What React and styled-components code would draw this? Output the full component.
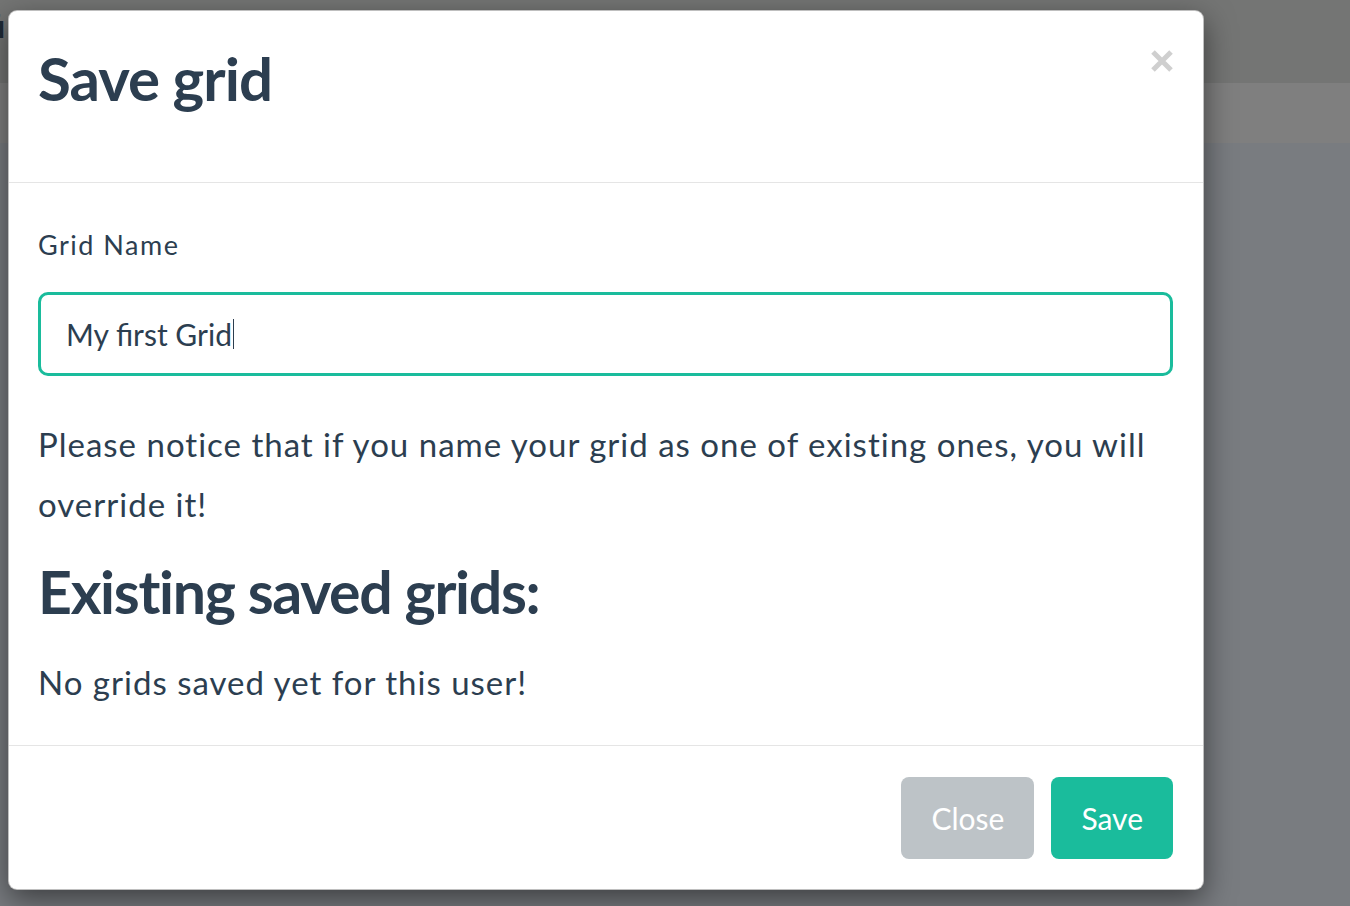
import React from 'react';
import styled, { createGlobalStyle } from 'styled-components';

const GlobalStyle = createGlobalStyle`
    html, body {
        margin: 0;
        padding: 0;
    }
    body {
        font-family: Lato, "Open Sans", "Liberation Sans", sans-serif;
        color: #2c3e50;
        overflow: hidden;
    }
`

const Backdrop = styled.div`
    position: relative;
    height: 906px;
    display: flex;
    flex-direction: column;
    background: #797c80;
`

const TopBand = styled.div`
    height: 83px;
    background: #747574;
    display: flex;
    align-items: flex-start;
`

const Brand = styled.span`
    margin: 8px 0 0 -14px;
    font-size: 32px;
    font-weight: 700;
    line-height: 36px;
    color: #1f2a36;
`

const SubBand = styled.div`
    height: 60px;
    background: #7f7f7f;
`

const Modal = styled.div`
    position: absolute;
    left: 8px;
    top: 10px;
    width: 1196px;
    height: 880px;
    box-sizing: border-box;
    background: #fff;
    border: 1px solid rgba(0, 0, 0, 0.25);
    border-radius: 9px;
    box-shadow: 0 10px 30px rgba(0, 0, 0, 0.5);
    display: flex;
    flex-direction: column;
`

const ModalHeader = styled.div`
    position: relative;
    height: 173px;
    box-sizing: border-box;
    padding: 31px 30px 0 29px;
    border-bottom: 1px solid #e5e5e5;
`

const Title = styled.h2`
    margin: 0;
    font-size: 60px;
    line-height: 73px;
    font-weight: 700;
    letter-spacing: -1px;
    color: #2c3e50;
`

const CloseX = styled.button`
    position: absolute;
    top: 39px;
    right: 30px;
    width: 22px;
    height: 22px;
    padding: 0;
    border: 0;
    background: none;
    cursor: pointer;
    display: flex;
`

const ModalBody = styled.div`
    padding: 46px 30px 40px 29px;
    display: flex;
    flex-direction: column;
`

const Label = styled.label`
    font-size: 27px;
    line-height: 32px;
    letter-spacing: 1.5px;
    margin-bottom: 31px;
`

const InputBox = styled.div`
    height: 84px;
    box-sizing: border-box;
    border: 3px solid #1abc9c;
    border-radius: 10px;
    padding: 0 25px;
    display: flex;
    align-items: center;
    font-size: 30px;
    color: #2c3e50;
    margin-bottom: 38px;
`

const Caret = styled.span`
    display: inline-block;
    width: 1.5px;
    height: 30px;
    margin-left: 1px;
    background: #2c3e50;
`

const Notice = styled.p`
    margin: 0 0 22px;
    font-size: 33px;
    line-height: 60px;
    letter-spacing: 1px;
`

const SectionTitle = styled.h3`
    margin: 0 0 32px;
    font-size: 59px;
    line-height: 72px;
    font-weight: 700;
    letter-spacing: -1.3px;
`

const Empty = styled.p`
    margin: 0;
    font-size: 33px;
    line-height: 45px;
    letter-spacing: 1px;
`

const ModalFooter = styled.div`
    border-top: 1px solid #e5e5e5;
    padding: 31px 30px 30px;
    display: flex;
    justify-content: flex-end;
    gap: 17px;
`

const Button = styled.button`
    height: 82px;
    padding: 0 30px;
    border: 0;
    border-radius: 8px;
    font-family: inherit;
    font-size: 30px;
    color: #fff;
    background: ${p => p.primary ? '#1abc9c' : '#bdc3c7'};
    cursor: pointer;
`

function App() {
    return <>
        <GlobalStyle />
        <Backdrop>
            <TopBand>
                <Brand>fi</Brand>
            </TopBand>
            <SubBand />
            <Modal>
                <ModalHeader>
                    <Title>Save grid</Title>
                    <CloseX aria-label="Close">
                        <svg width="22" height="22" viewBox="0 0 22 22">
                            <path d="M2 2L20 20M20 2L2 20" stroke="#cfcfcf" strokeWidth="5" />
                        </svg>
                    </CloseX>
                </ModalHeader>
                <ModalBody>
                    <Label>Grid Name</Label>
                    <InputBox>My first Grid<Caret /></InputBox>
                    <Notice>Please notice that if you name your grid as one of existing ones, you will override it!</Notice>
                    <SectionTitle>Existing saved grids:</SectionTitle>
                    <Empty>No grids saved yet for this user!</Empty>
                </ModalBody>
                <ModalFooter>
                    <Button>Close</Button>
                    <Button primary>Save</Button>
                </ModalFooter>
            </Modal>
        </Backdrop>
    </>
}

export default App;
